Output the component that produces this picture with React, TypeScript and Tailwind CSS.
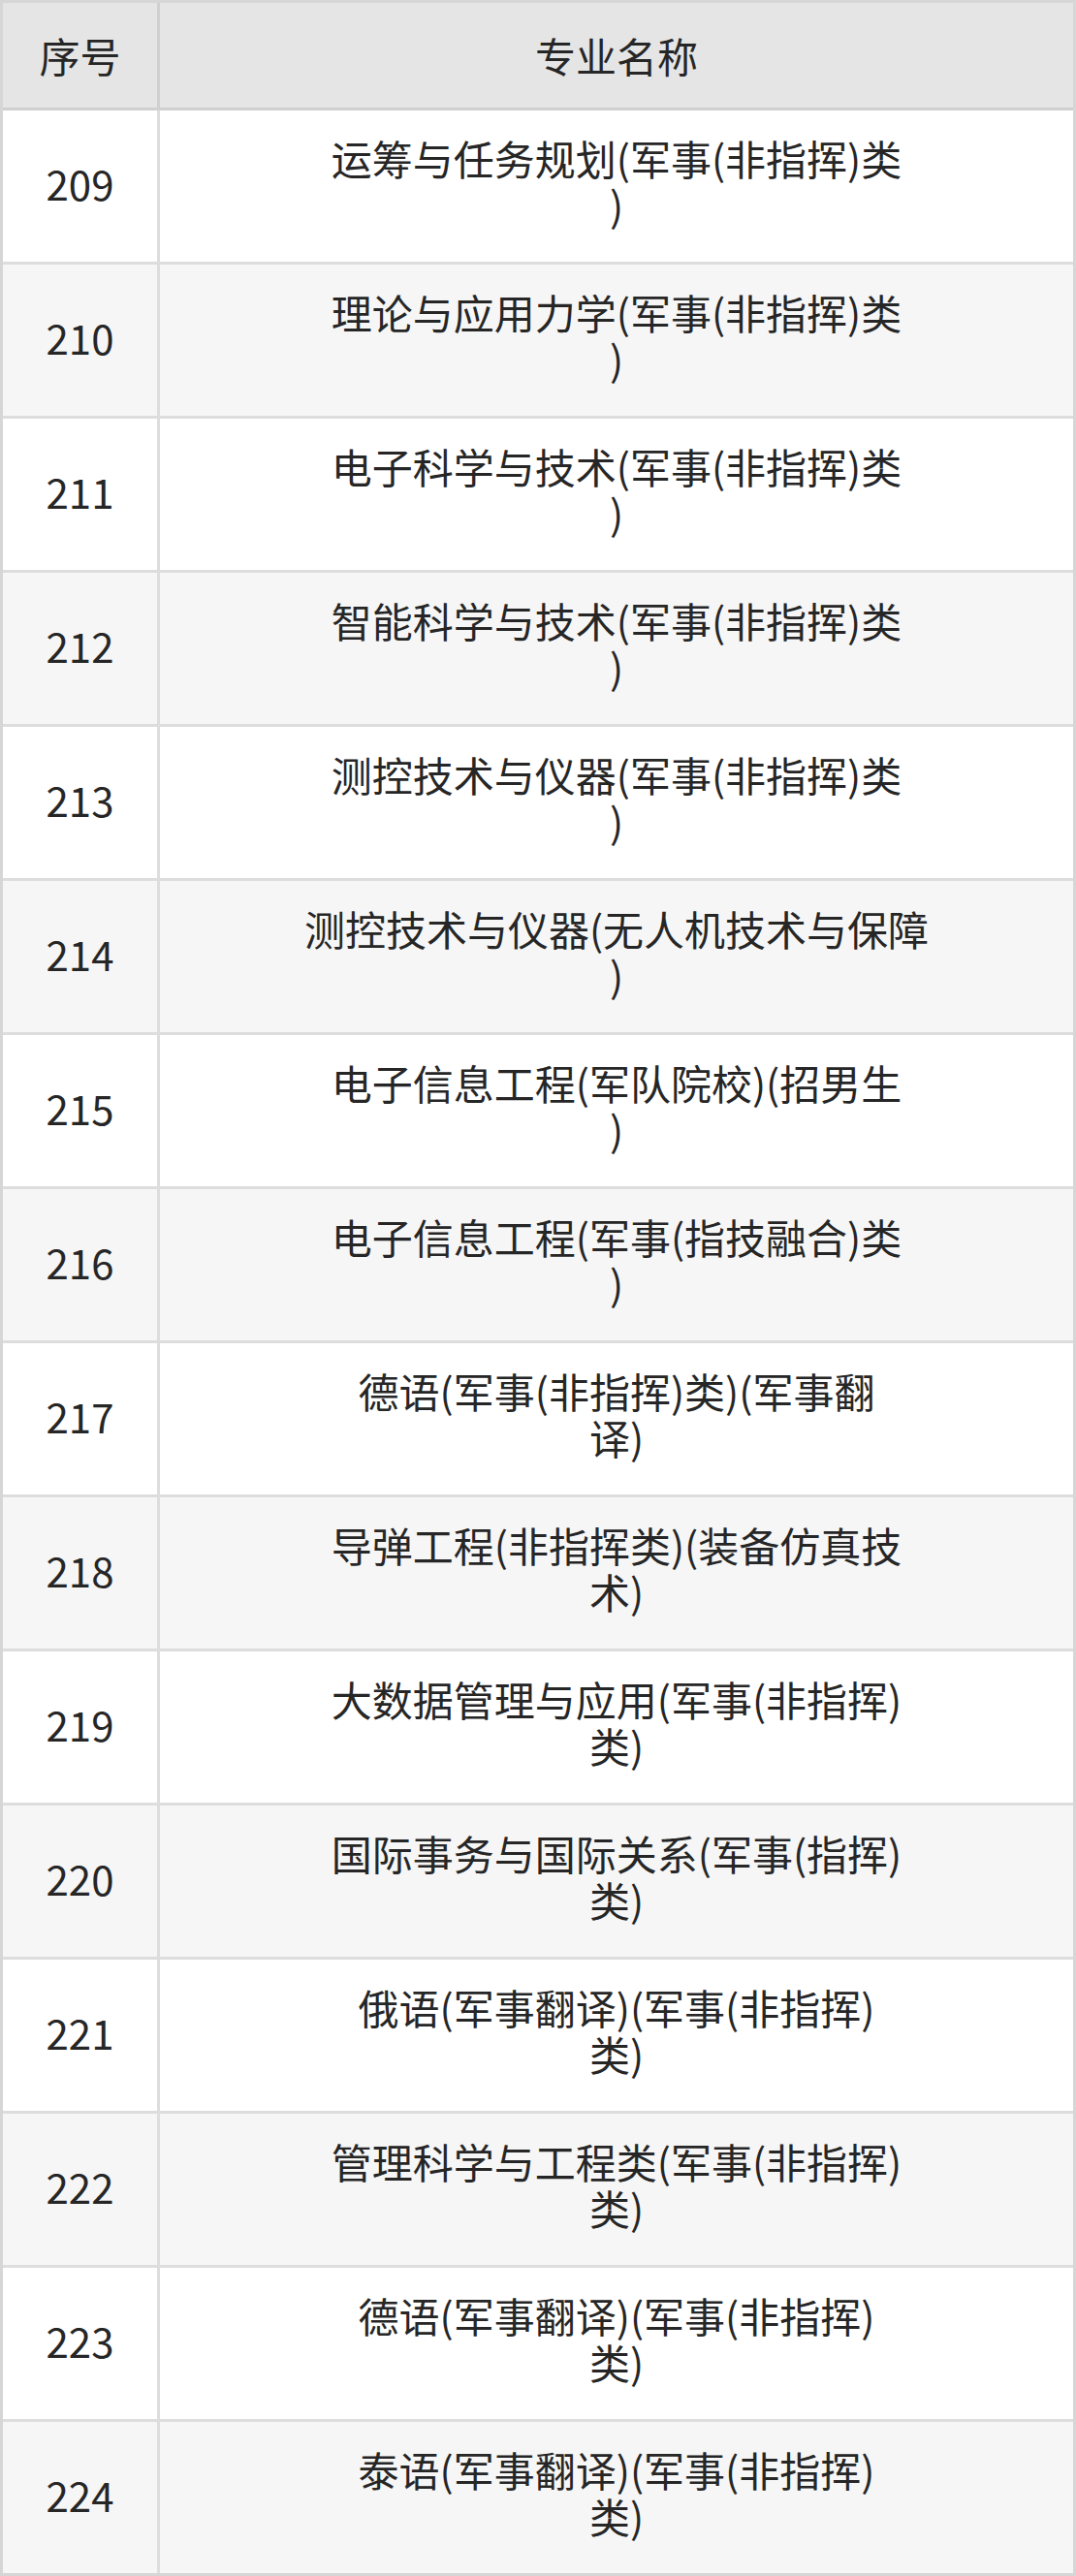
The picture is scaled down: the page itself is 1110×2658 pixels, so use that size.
const rows: { no: string; lines: string[] }[] = [
  { no: "209", lines: ["运筹与任务规划(军事(非指挥)类", ")"] },
  { no: "210", lines: ["理论与应用力学(军事(非指挥)类", ")"] },
  { no: "211", lines: ["电子科学与技术(军事(非指挥)类", ")"] },
  { no: "212", lines: ["智能科学与技术(军事(非指挥)类", ")"] },
  { no: "213", lines: ["测控技术与仪器(军事(非指挥)类", ")"] },
  { no: "214", lines: ["测控技术与仪器(无人机技术与保障", ")"] },
  { no: "215", lines: ["电子信息工程(军队院校)(招男生", ")"] },
  { no: "216", lines: ["电子信息工程(军事(指技融合)类", ")"] },
  { no: "217", lines: ["德语(军事(非指挥)类)(军事翻", "译)"] },
  { no: "218", lines: ["导弹工程(非指挥类)(装备仿真技", "术)"] },
  { no: "219", lines: ["大数据管理与应用(军事(非指挥)", "类)"] },
  { no: "220", lines: ["国际事务与国际关系(军事(指挥)", "类)"] },
  { no: "221", lines: ["俄语(军事翻译)(军事(非指挥)", "类)"] },
  { no: "222", lines: ["管理科学与工程类(军事(非指挥)", "类)"] },
  { no: "223", lines: ["德语(军事翻译)(军事(非指挥)", "类)"] },
  { no: "224", lines: ["泰语(军事翻译)(军事(非指挥)", "类)"] },
];

export default function App() {
  return (
    <div className="w-[1110px] bg-white font-['Noto_Sans_CJK_SC','Noto_Sans',sans-serif] text-[42px] leading-[48px] text-[#262626]">
      <div className="border-[3px] border-[#d6d6d6]">
        <div className="flex h-[111px] border-b-[3px] border-[#d0d0d0] bg-[#e5e5e5]">
          <div className="flex w-[162px] shrink-0 items-center justify-center border-r-[3px] border-[#d0d0d0]">
            序号
          </div>
          <div className="flex flex-1 items-center justify-center">专业名称</div>
        </div>
        {rows.map((r, i) => (
          <div
            key={r.no}
            className={`flex ${i > 0 ? "h-[159px] border-t-[3px] border-[#dddddd]" : "h-[156px]"} ${
              i % 2 === 0 ? "bg-white" : "bg-[#f6f6f6]"
            }`}
          >
            <div className="flex w-[162px] shrink-0 items-center justify-center border-r-[3px] border-[#dddddd] pb-[7px]">
              {r.no}
            </div>
            <div className="flex flex-1 flex-col items-center justify-center pb-[11px] text-center">
              {r.lines.map((l, j) => (
                <span key={j} className="block whitespace-nowrap">
                  {l}
                </span>
              ))}
            </div>
          </div>
        ))}
      </div>
    </div>
  );
}
